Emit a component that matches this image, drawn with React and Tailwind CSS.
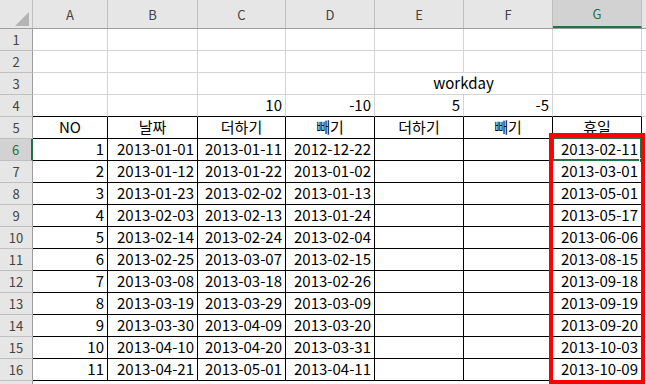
const cols = [
  { key: 'A', w: 75 },
  { key: 'B', w: 90 },
  { key: 'C', w: 88 },
  { key: 'D', w: 89 },
  { key: 'E', w: 89 },
  { key: 'F', w: 89 },
  { key: 'G', w: 89 },
  { key: 'H', w: 60 },
];

const heads = ['NO', '날짜', '더하기', '빼기', '더하기', '빼기', '휴일'];

const data = [
  [1, '2013-01-01', '2013-01-11', '2012-12-22', '2013-02-11'],
  [2, '2013-01-12', '2013-01-22', '2013-01-02', '2013-03-01'],
  [3, '2013-01-23', '2013-02-02', '2013-01-13', '2013-05-01'],
  [4, '2013-02-03', '2013-02-13', '2013-01-24', '2013-05-17'],
  [5, '2013-02-14', '2013-02-24', '2013-02-04', '2013-06-06'],
  [6, '2013-02-25', '2013-03-07', '2013-02-15', '2013-08-15'],
  [7, '2013-03-08', '2013-03-18', '2013-02-26', '2013-09-18'],
  [8, '2013-03-19', '2013-03-29', '2013-03-09', '2013-09-19'],
  [9, '2013-03-30', '2013-04-09', '2013-03-20', '2013-09-20'],
  [10, '2013-04-10', '2013-04-20', '2013-03-31', '2013-10-03'],
  [11, '2013-04-21', '2013-05-01', '2013-04-11', '2013-10-09'],
];

const font = {
  fontFamily:
    '"Noto Sans CJK KR", "Noto Sans CJK JP", "Noto Sans CJK SC", "Noto Sans CJK TC", sans-serif',
};

function RowHead({ n, active }) {
  return (
    <div
      className={`w-[33px] h-[22px] shrink-0 flex items-center justify-center text-[13px] border-b ${
        active
          ? 'bg-[#d2d2d2] text-[#217346] border-b-[#bfbfbf] border-r-2 border-r-[#217346]'
          : 'bg-[#e6e6e6] text-[#444] border-b-[#bfbfbf] border-r border-r-[#9e9e9e]'
      }`}
    >
      {n}
    </div>
  );
}

function Cell({ w, children, align = 'right', black, blackBottom }) {
  const edge = black
    ? 'border-r-black border-b-black'
    : blackBottom
      ? 'border-b-black border-r-[#d4d4d4]'
      : 'border-r-[#d4d4d4] border-b-[#d4d4d4]';
  return (
    <div
      style={{ width: w }}
      className={`h-[22px] shrink-0 border-r border-b ${edge} flex items-center px-[3px] text-[15px] text-black whitespace-nowrap overflow-hidden ${
        align === 'center' ? 'justify-center' : 'justify-end'
      }`}
    >
      {children}
    </div>
  );
}

export default function App() {
  const top = [
    ['', '', '', '', '', '', '', ''],
    ['', '', '', '', '', '', '', ''],
    null,
    ['', '', '10', '-10', '5', '-5', '', ''],
  ];

  return (
    <div className="relative w-[646px] h-[384px] overflow-hidden bg-white" style={font}>
      {/* column letters */}
      <div className="flex h-[29px] bg-[#e6e6e6] border-b border-[#9e9e9e]">
        <div className="w-[33px] shrink-0 relative border-r border-[#bfbfbf]">
          <div className="absolute right-[3px] bottom-[2px] w-0 h-0 border-l-[14px] border-l-transparent border-b-[14px] border-b-[#b4b4b4]" />
        </div>
        {cols.map((c) => (
          <div
            key={c.key}
            style={{ width: c.w }}
            className={`shrink-0 flex items-center justify-center text-[13px] pt-[2px] ${
              c.key === 'G'
                ? 'bg-[#d2d2d2] text-[#217346] border-b-2 border-[#217346] border-r border-r-[#bfbfbf]'
                : 'text-[#444] border-r border-[#bfbfbf]'
            }`}
          >
            {c.key === 'H' ? '' : c.key}
          </div>
        ))}
      </div>

      {/* rows 1-4 */}
      {top.map((r, i) => (
        <div key={i} className="flex">
          <RowHead n={i + 1} />
          {r === null ? (
            <>
              <Cell w={75} />
              <Cell w={90} />
              <Cell w={88} />
              <Cell w={89} />
              <Cell w={178} align="center">workday</Cell>
              <Cell w={89} />
              <Cell w={60} />
            </>
          ) : (
            cols.map((c, j) => (
              <Cell key={c.key} w={c.w} blackBottom={i === 3 && j < 7}>
                {r[j]}
              </Cell>
            ))
          )}
        </div>
      ))}

      {/* header row 5 */}
      <div className="flex">
        <RowHead n={5} />
        {heads.map((h, j) => (
          <Cell key={j} w={cols[j].w} align="center" black>
            {h}
          </Cell>
        ))}
        <Cell w={60} />
      </div>

      {/* data rows */}
      {data.map((r, i) => (
        <div key={i} className="flex">
          <RowHead n={i + 6} active={i === 0} />
          <Cell w={75} black>{r[0]}</Cell>
          <Cell w={90} black>{r[1]}</Cell>
          <Cell w={88} black>{r[2]}</Cell>
          <Cell w={89} black>{r[3]}</Cell>
          <Cell w={89} black />
          <Cell w={89} black />
          <Cell w={89} black>{r[4]}</Cell>
          <Cell w={60} />
        </div>
      ))}
      <div className="flex">
        <RowHead n="" />
      </div>

      {/* active cell G6 */}
      <div className="absolute left-[552px] top-[137px] w-[90px] h-[24px] border-2 border-[#217346]" />
      <div className="absolute left-[639px] top-[158px] w-[5px] h-[5px] bg-[#217346] border border-white" />

      {/* red outline around the holiday column */}
      <div className="absolute left-[549px] top-[133px] w-[96px] h-[251px] border-4 border-[#ff0000]" />
    </div>
  );
}
